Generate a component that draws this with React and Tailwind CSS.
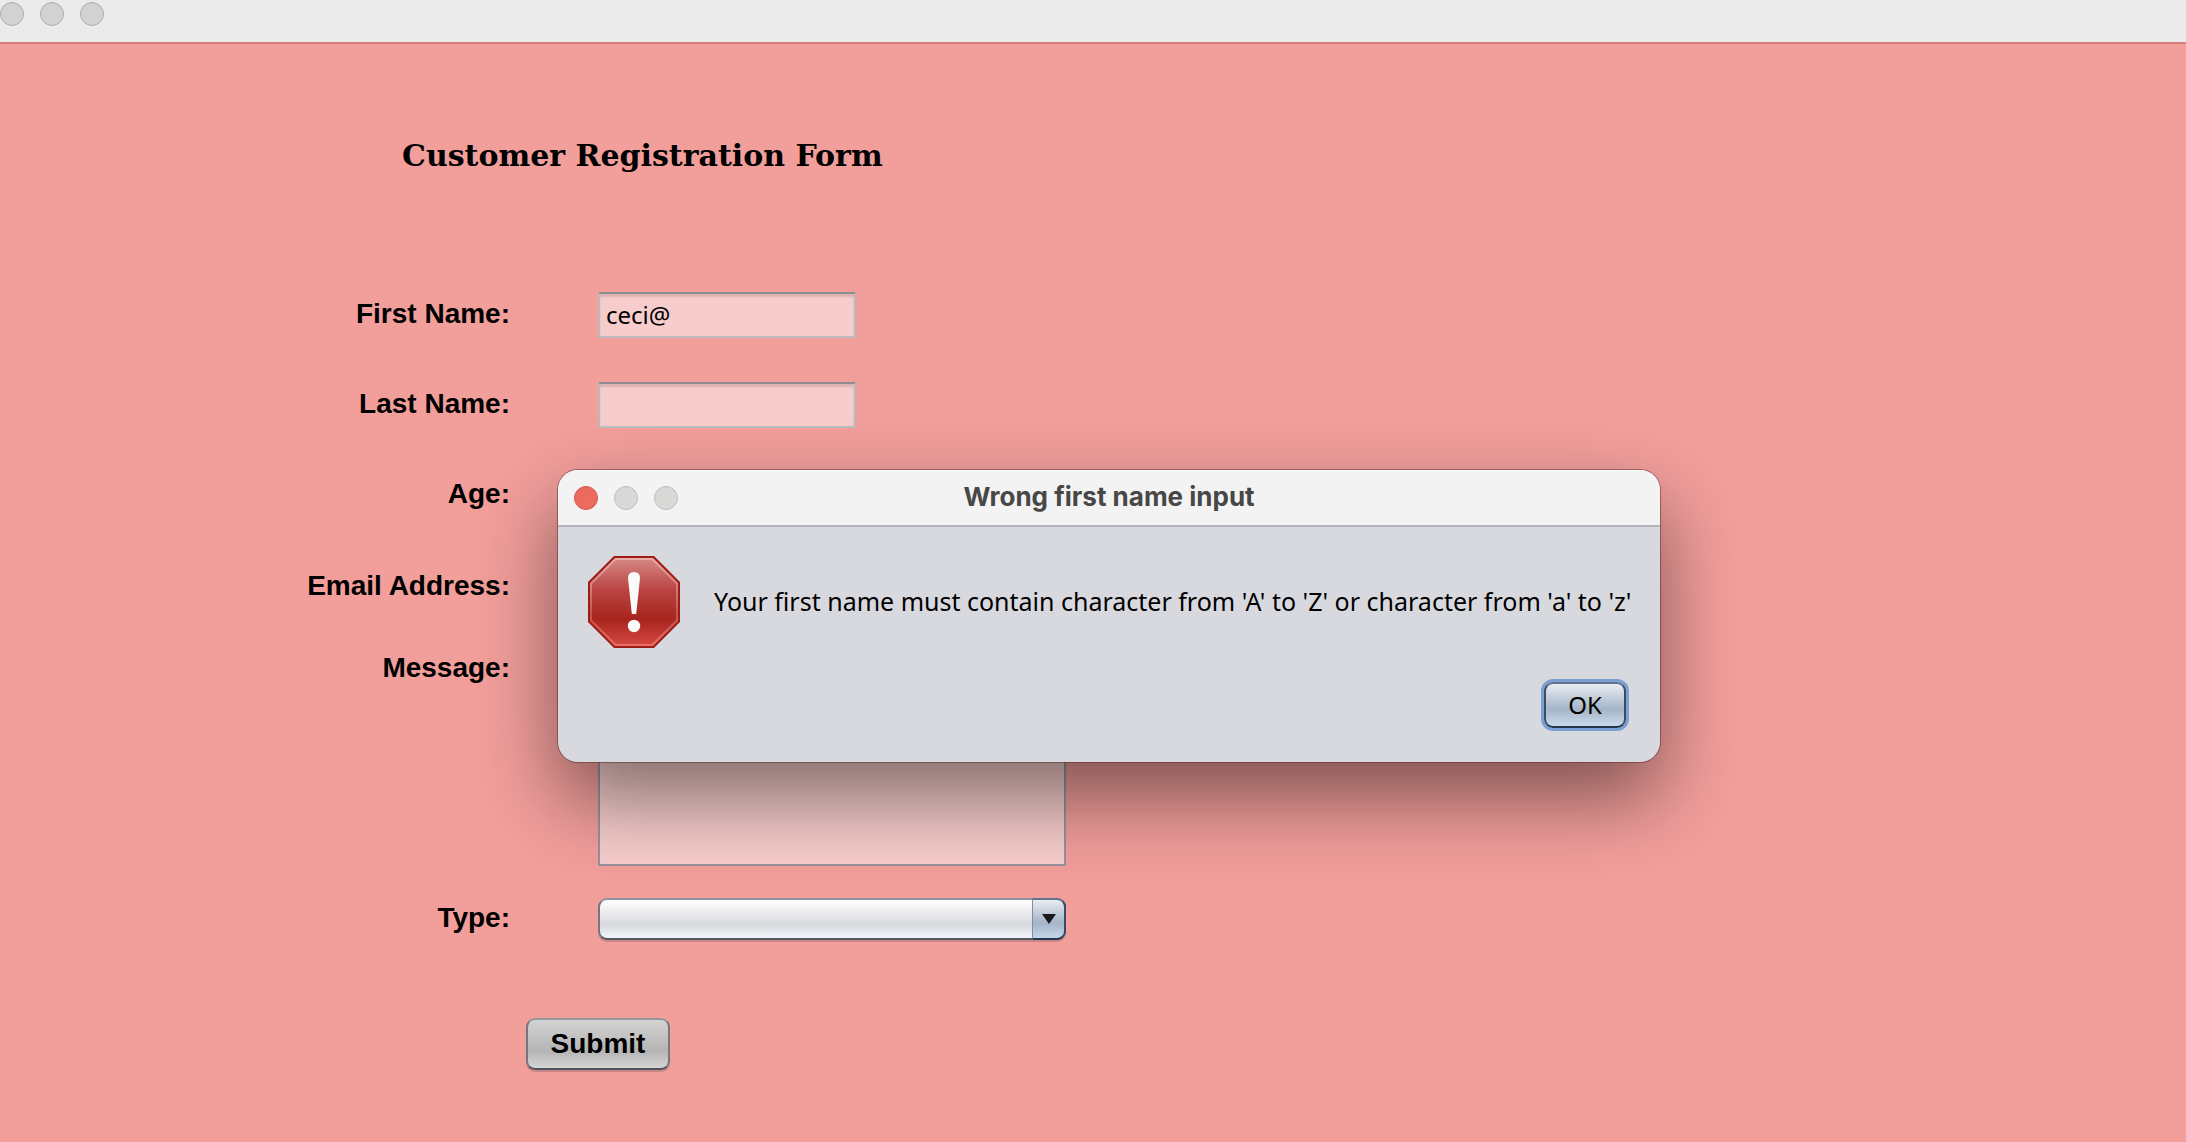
import { useState } from "react";

const fieldClass =
  "h-[46px] w-[258px] border-2 border-t-[#8d8d8f] border-r-[#b9b9bb] border-b-[#bdbdbf] border-l-[#b9b9bb] bg-[#f7cccc] px-1.5 pb-0.5 font-['Noto_Sans',sans-serif] text-2xl leading-7 text-black shadow-[inset_0_3px_2px_#dcb2b2] outline-none";

function Field({ id, label, value = "" }) {
  const [text, setText] = useState(value);
  return (
    <div className="flex items-center gap-[88px]">
      <Label id={id}>{label}</Label>
      <input id={id} type="text" value={text} onChange={(e) => setText(e.target.value)} className={fieldClass} />
    </div>
  );
}

function Label({ id, children }) {
  return (
    <label htmlFor={id} className="w-[510px] shrink-0 pb-0.5 text-right text-[28px] leading-10 font-bold">
      {children}
    </label>
  );
}

function StopIcon() {
  return (
    <svg viewBox="0 0 92 92" className="size-[92px] shrink-0" aria-hidden="true">
      <defs>
        <linearGradient id="stop-fill" x1="0" y1="0" x2="0" y2="1">
          <stop offset="0" stopColor="#d48482" />
          <stop offset="0.36" stopColor="#b94441" />
          <stop offset="0.7" stopColor="#a8251d" />
          <stop offset="1" stopColor="#d2453f" />
        </linearGradient>
        <linearGradient id="stop-edge" x1="0" y1="0" x2="0" y2="1">
          <stop offset="0" stopColor="#e6aeac" />
          <stop offset="0.65" stopColor="#bf5450" />
          <stop offset="1" stopColor="#e8706b" />
        </linearGradient>
      </defs>
      <path d="M26 0H66L92 26V66L66 92H26L0 66V26Z" fill="#9f1c15" />
      <path d="M27 2H65L90 27V65L65 90H27L2 65V27Z" fill="url(#stop-edge)" />
      <path d="M28 4H64L88 28V64L64 88H28L4 64V28Z" fill="url(#stop-fill)" />
      <path d="M40 22Q40 16 46 16Q52 16 52 22L48.2 58H43.8Z" fill="#fafafa" />
      <circle cx="46" cy="70" r="6.2" fill="#fafafa" />
    </svg>
  );
}

function ErrorDialog({ onClose }) {
  return (
    <div
      role="alertdialog"
      aria-labelledby="dialog-title"
      aria-describedby="dialog-text"
      className="absolute top-[470px] left-[558px] flex w-[1102px] flex-col overflow-hidden rounded-[20px] bg-[#d8d9df] shadow-[0_0_0_1px_rgba(90,40,40,0.5),0_36px_80px_rgba(0,0,0,0.48)]"
    >
      <div className="grid h-[57px] grid-cols-[1fr_auto_1fr] items-center border-b-2 border-[#b3b5bb] bg-[#f3f3f3] px-4 shadow-[inset_0_1px_0_#ffffff]">
        <div className="flex gap-4">
          <button type="button" aria-label="Close" onClick={onClose} className="size-6 rounded-full border border-[#d5584c] bg-[#ec6a5e]" />
          <button type="button" aria-label="Minimize" className="size-6 rounded-full border border-[#bcbcbb] bg-[#d9d9d8]" />
          <button type="button" aria-label="Zoom" className="size-6 rounded-full border border-[#bcbcbb] bg-[#d9d9d8]" />
        </div>
        <h2 id="dialog-title" className="pb-0.5 font-['Inter',sans-serif] text-[26px] leading-8 font-bold text-[#474747]">
          Wrong first name input
        </h2>
      </div>
      <div className="flex items-center gap-[34px] px-[30px] pt-[29px]">
        <StopIcon />
        <p id="dialog-text" className="pb-0.5 font-['Noto_Sans',sans-serif] text-[25px] leading-8 whitespace-nowrap text-black">
          Your first name must contain character from 'A' to 'Z' or character from 'a' to 'z'
        </p>
      </div>
      <div className="flex justify-end p-[34px]">
        <button
          type="button"
          onClick={onClose}
          className="h-[46px] w-[82px] rounded-[9px] border-2 border-t-[#64718a] border-r-[#3b4b63] border-b-[#26364c] border-l-[#3b4b63] bg-linear-to-b from-[#e9edf3] via-[#a5b5c8] via-60% to-[#c9dbee] font-['Noto_Sans',sans-serif] text-2xl leading-8 text-black shadow-[0_0_0_3px_#7ba1d3]"
        >
          OK
        </button>
      </div>
    </div>
  );
}

export default function App() {
  const [open, setOpen] = useState(true);
  return (
    <div className="relative flex min-h-screen flex-col overflow-hidden bg-[#f29e9b] font-['Liberation_Sans',sans-serif] text-black">
      <header className="flex h-11 items-start gap-4 border-b-2 border-[#d67f7c] bg-[#ebebeb] pt-0.5">
        <button type="button" aria-label="Close window" className="size-6 rounded-full border border-[#adadad] bg-[#d2d2d2]" />
        <button type="button" aria-label="Minimize window" className="size-6 rounded-full border border-[#adadad] bg-[#d2d2d2]" />
        <button type="button" aria-label="Zoom window" className="size-6 rounded-full border border-[#adadad] bg-[#d2d2d2]" />
      </header>
      <main>
        <form onSubmit={(e) => e.preventDefault()} className="flex flex-col">
          <h1 className="mt-[90px] mb-[114px] ml-[402px] font-['DejaVu_Serif',serif] text-[30px] leading-[44px] font-bold whitespace-nowrap">
            Customer Registration Form
          </h1>
          <div className="flex flex-col gap-11">
            <Field id="first" label="First Name:" value="ceci@" />
            <Field id="last" label="Last Name:" />
            <Field id="age" label="Age:" />
          </div>
          <div className="mt-[46px]">
            <Field id="email" label="Email Address:" />
          </div>
          <div className="mt-[38px] flex items-start gap-[88px]">
            <Label id="message">Message:</Label>
            <textarea id="message" className="h-[218px] w-[468px] resize-none border-2 border-[#94949d] bg-[#f7cccc] p-1.5 text-2xl outline-none" />
          </div>
          <div className="mt-8 flex items-center gap-[88px]">
            <Label id="type">Type:</Label>
            <div className="relative w-[468px]">
              <select
                id="type"
                className="block h-[42px] w-full appearance-none rounded-[9px] border-2 border-t-[#90929c] border-r-[#3b4b63] border-b-[#55565c] border-l-[#75767e] bg-linear-to-b from-white via-[#d8d9dd] via-65% to-[#f2f6fc] px-3 text-2xl shadow-[0_2px_0_rgba(120,90,100,0.35)] outline-none"
              >
                <option value=""></option>
              </select>
              <span className="pointer-events-none absolute inset-y-0 right-0 flex w-[34px] items-center justify-center rounded-r-[9px] border-2 border-l border-t-[#64718a] border-r-[#3b4b63] border-b-[#26364c] border-l-[#7d8ea5] bg-linear-to-b from-[#e9edf3] via-[#a5b5c8] via-60% to-[#c4d6ea]">
                <svg viewBox="0 0 14 10" className="h-[10px] w-[14px]" aria-hidden="true">
                  <path d="M0 0H14L7 10Z" fill="#1a1a1a" />
                </svg>
              </span>
            </div>
          </div>
          <button
            type="submit"
            className="mt-[78px] ml-[526px] h-[52px] w-36 rounded-[9px] border-2 border-t-[#94969c] border-r-[#73767e] border-b-[#50545e] border-l-[#73767e] bg-linear-to-b from-[#d3d3d3] via-[#b4b4b4] via-65% to-[#d6d6d6] text-[28px] leading-10 font-bold shadow-[0_2px_0_rgba(120,90,100,0.35)]"
          >
            Submit
          </button>
        </form>
      </main>
      {open && <ErrorDialog onClose={() => setOpen(false)} />}
    </div>
  );
}
